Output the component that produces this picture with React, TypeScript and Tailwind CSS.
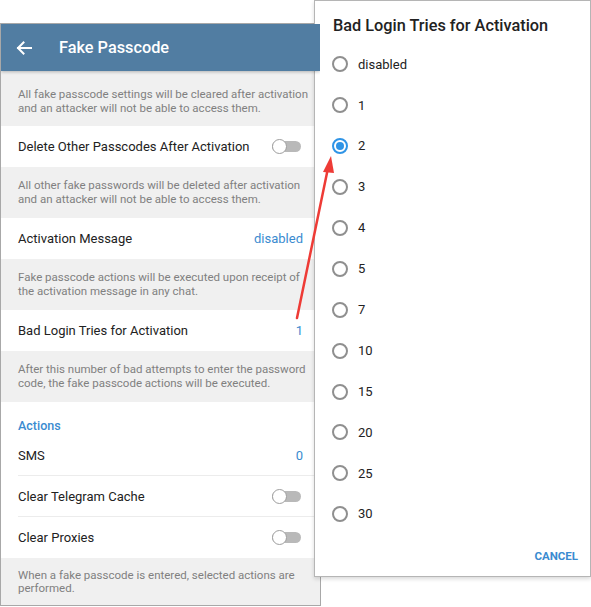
import React from 'react'

function Toggle() {
  return (
    <div className="relative w-[29px] h-[15px] flex items-center">
      <div className="w-full h-[11px] rounded-full bg-[#b9b9b9]" />
      <div className="absolute left-0 top-0 w-[15px] h-[15px] rounded-full bg-white border border-[#9e9e9e]" />
    </div>
  )
}

function Info({ lines, h = 51, pt = 0 }: { lines: string[]; h?: number; pt?: number }) {
  return (
    <div
      className="shrink-0 bg-[#f0f0f0] px-[17px] flex flex-col justify-center text-[11.5px] leading-[13.5px] text-[#808080] whitespace-nowrap"
      style={{ height: h, paddingTop: pt }}
    >
      {lines.map((l) => (
        <span key={l}>{l}</span>
      ))}
    </div>
  )
}

function Row({ label, value, toggle, divider, h = 41 }: { label: string; value?: string; toggle?: boolean; divider?: boolean; h?: number }) {
  return (
    <div className="shrink-0 relative flex items-center justify-between pl-[17px] pr-[19px] bg-white" style={{ height: h }}>
      <span className="text-[13px] text-[#222] whitespace-nowrap">{label}</span>
      {value && <span className="text-[13px] text-[#3a8bd0] -mr-[2px]">{value}</span>}
      {toggle && <Toggle />}
      {divider && <div className="absolute left-[17px] right-0 bottom-0 h-px bg-[#ececec]" />}
    </div>
  )
}

function Radio({ label, checked }: { label: string; checked?: boolean }) {
  return (
    <div className="h-[40.9px] flex items-center gap-[10px] pl-[17px]">
      <div className={`w-[16px] h-[16px] rounded-full border-2 flex items-center justify-center ${checked ? 'border-[#2f94e6]' : 'border-[#8f8f8f]'}`}>
        {checked && <div className="w-[8px] h-[8px] rounded-full bg-[#2f94e6]" />}
      </div>
      <span className="text-[13px] text-[#222]">{label}</span>
    </div>
  )
}

export default function App() {
  const options = ['disabled', '1', '2', '3', '4', '5', '7', '10', '15', '20', '25', '30']
  return (
    <div className="relative w-[591px] h-[607px] bg-white overflow-hidden" style={{ fontFamily: 'Roboto, "Noto Sans", sans-serif' }}>
      <div className="mt-[23px] w-[321px] h-[583px] border border-[#a8a8a8] flex flex-col overflow-hidden">
        <div className="h-[47px] shrink-0 bg-[#517da2] flex items-center px-[15px] pt-[1px] gap-[27px] shadow-[0_1px_3px_rgba(0,0,0,0.25)] z-10">
          <svg width="16" height="14" viewBox="0 0 16 14" fill="none" stroke="white" strokeWidth="2" strokeLinecap="square">
            <path d="M2 7h13M7.5 1.5L2 7l5.5 5.5" />
          </svg>
          <span className="text-white text-[16.3px] font-medium">Fake Passcode</span>
        </div>
        <Info
          h={55}
          pt={6}
          lines={['All fake passcode settings will be cleared after activation', 'and an attacker will not be able to access them.']}
        />
        <Row label="Delete Other Passcodes After Activation" toggle />
        <Info lines={['All other fake passwords will be deleted after activation', 'and an attacker will not be able to access them.']} />
        <Row label="Activation Message" value="disabled" />
        <Info lines={['Fake passcode actions will be executed upon receipt of', 'the activation message in any chat.']} />
        <Row label="Bad Login Tries for Activation" value="1" />
        <Info lines={['After this number of bad attempts to enter the password', 'code, the fake passcode actions will be executed.']} />
        <div className="h-[34px] shrink-0 flex items-end pl-[17px] pb-0 bg-white">
          <span className="text-[12.5px] font-medium text-[#3a8bd0]">Actions</span>
        </div>
        <Row label="SMS" value="0" divider h={40} />
        <Row label="Clear Telegram Cache" toggle divider />
        <Row label="Clear Proxies" toggle />
        <Info h={48} lines={['When a fake passcode is entered, selected actions are', 'performed.']} />
      </div>

      <div className="absolute left-[314px] top-0 w-[277px] h-[577px] bg-white border border-[#b5b5b5] shadow-[0_2px_4px_rgba(0,0,0,0.15)] flex flex-col">
        <div className="h-[43px] shrink-0 flex items-end pl-[18px] pb-[6px]">
          <span className="text-[16.3px] font-medium text-[#222]">Bad Login Tries for Activation</span>
        </div>
        <div className="flex flex-col">
          {options.map((o) => (
            <Radio key={o} label={o} checked={o === '2'} />
          ))}
        </div>
        <div className="flex justify-end pr-[12px] pt-[13px]">
          <span className="text-[11.5px] font-bold text-[#3a8bd0]">CANCEL</span>
        </div>
      </div>

      <svg className="absolute left-0 top-0 pointer-events-none" width="591" height="607">
        <line x1="297" y1="318" x2="328" y2="168" stroke="#ee3b36" strokeWidth="2.5" strokeLinecap="round" />
        <polygon points="331,156 323,172 334,173" fill="#ee3b36" />
      </svg>
    </div>
  )
}
